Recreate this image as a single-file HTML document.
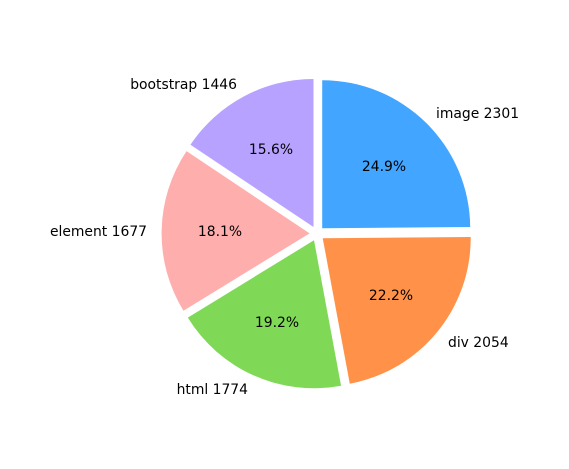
<!DOCTYPE html>
<html><head><meta charset="utf-8"><style>
html,body{margin:0;padding:0;background:#fff;width:569px;height:469px;overflow:hidden}
svg text{font-family:"DejaVu Sans","Liberation Sans",sans-serif;font-size:13.9px;fill:#000}
</style></head><body>
<svg id="s" width="569" height="469" viewBox="0 0 569 469">
<g id="w"></g>
<text x="436" y="118">image 2301</text>
<text x="448" y="347">div 2054</text>
<text x="248" y="394" text-anchor="end">html 1774</text>
<text x="147" y="236" text-anchor="end">element 1677</text>
<text x="237" y="89" text-anchor="end">bootstrap 1446</text>
<text x="384" y="171" text-anchor="middle">24.9%</text>
<text x="391" y="300" text-anchor="middle">22.2%</text>
<text x="277" y="327" text-anchor="middle">19.2%</text>
<text x="220" y="236" text-anchor="middle">18.1%</text>
<text x="271" y="154" text-anchor="middle">15.6%</text>
</svg>
<script>
var v=[2301,2054,1774,1677,1446],c=["#42a5ff","#ff9248","#7fd957","#ffaeae","#b8a2ff"];
var t=v.reduce((a,b)=>a+b),cx=317,cy=233.5,r=148,e=7.4,a=90,g=document.getElementById('w'),h='';
v.forEach(function(x,i){var s=x/t*360,a2=a-s,m=(a+a2)/2*Math.PI/180;
var ox=cx+e*Math.cos(m),oy=cy-e*Math.sin(m);
var p1=[ox+r*Math.cos(a*Math.PI/180),oy-r*Math.sin(a*Math.PI/180)],p2=[ox+r*Math.cos(a2*Math.PI/180),oy-r*Math.sin(a2*Math.PI/180)];
h+='<path fill="'+c[i]+'" d="M'+ox+','+oy+'L'+p1+'A'+r+','+r+' 0 '+(s>180?1:0)+' 1 '+p2+'Z"/>';a=a2;});
g.innerHTML=h;
</script>
</body></html>
